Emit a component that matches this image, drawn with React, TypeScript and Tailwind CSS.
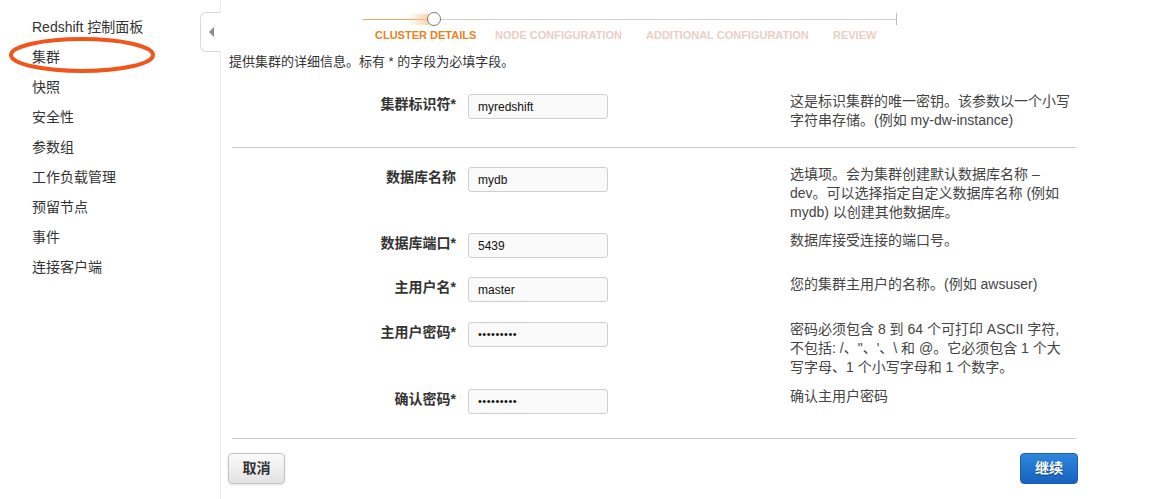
import React from "react";

const navItems = ["集群", "快照", "安全性", "参数组", "工作负载管理", "预留节点", "事件", "连接客户端"];

const steps = [
  { label: "CLUSTER DETAILS", active: true, w: "w-[120px]" },
  { label: "NODE CONFIGURATION", active: false, w: "w-[151px]" },
  { label: "ADDITIONAL CONFIGURATION", active: false, w: "w-[187px]" },
  { label: "REVIEW", active: false, w: "w-[50px]" },
];

type Field = {
  label: string;
  value: string;
  password?: boolean;
  desc: string[];
  top: string;
};

const fields: Field[] = [
  {
    label: "数据库名称",
    value: "mydb",
    desc: ["选填项。会为集群创建默认数据库名称 –", "dev。可以选择指定自定义数据库名称 (例如", "mydb) 以创建其他数据库。"],
    top: "mt-[17px]",
  },
  { label: "数据库端口*", value: "5439", desc: ["数据库接受连接的端口号。"], top: "mt-[9px]" },
  { label: "主用户名*", value: "master", desc: ["您的集群主用户的名称。(例如 awsuser)"], top: "mt-[17px]" },
  {
    label: "主用户密码*",
    value: "•••••••••",
    password: true,
    desc: ["密码必须包含 8 到 64 个可打印 ASCII 字符,", "不包括: /、\"、'、\\ 和 @。它必须包含 1 个大", "写字母、1 个小写字母和 1 个数字。"],
    top: "mt-[18px]",
  },
  { label: "确认密码*", value: "•••••••••", password: true, desc: ["确认主用户密码"], top: "mt-[10px]" },
];

function Row({ f, top }: { f: Field; top: string }) {
  return (
    <div className={`flex items-start ${top}`}>
      <div className="w-[239px] text-right pr-[12px] leading-[25px] text-[14px] font-semibold text-[#333]">
        {f.label}
      </div>
      <div
        className={`w-[140px] h-[25px] mt-[2px] rounded-[3px] border border-[#cfcfcf] bg-[#fafafa] pl-[9px] flex items-center text-[#111] ${
          f.password ? "text-[11px] tracking-[0.5px]" : "text-[12px]"
        }`}
      >
        {f.value}
      </div>
      <div className="ml-[182px] text-[14px] leading-[19px] text-[#444]">
        {f.desc.map((d) => (
          <div key={d}>{d}</div>
        ))}
      </div>
    </div>
  );
}

export default function App() {
  return (
    <div
      className="relative flex h-[499px] w-[1171px] overflow-hidden bg-white text-[#333]"
      style={{ fontFamily: '"Liberation Sans", "Noto Sans CJK SC", sans-serif' }}
    >
      {/* Sidebar */}
      <aside className="relative w-[221px] shrink-0 border-r border-[#ececec] pt-[17px]">
        <div className="pl-[32px] text-[14px] leading-[20px] text-[#333]">Redshift 控制面板</div>
        <ul className="mt-[10px] flex flex-col gap-[10px]">
          {navItems.map((n) => (
            <li key={n} className="pl-[32px] text-[14px] leading-[20px] text-[#333]">
              {n}
            </li>
          ))}
        </ul>
        {/* hand-drawn highlight */}
        <svg className="absolute left-[8px] top-[36px]" width="148" height="38" viewBox="0 0 148 38">
          <ellipse cx="74" cy="19" rx="71" ry="16" fill="none" stroke="#f0561c" strokeWidth="4" />
        </svg>
        {/* collapse tab */}
        <div className="absolute right-[-1px] top-[12px] flex h-[40px] w-[21px] items-center justify-center rounded-l-[6px] border border-r-0 border-[#d8d8d8] bg-white">
          <div className="h-0 w-0 border-y-[5px] border-r-[5px] border-y-transparent border-r-[#8a8a8a]" />
        </div>
      </aside>

      {/* Main */}
      <main className="flex-1 pl-[8px]">
        {/* Wizard steps */}
        <div className="ml-[134px] w-[534px] pt-[13px]">
          <div className="relative h-[12px]">
            <div className="absolute left-0 right-0 top-[6px] h-px bg-[#cfcfcf]" />
            <div className="absolute left-0 top-[6px] h-px w-[64px] bg-[#f0a55a]" />
            <div className="absolute left-[44px] top-[1px] h-[11px] w-[22px] bg-gradient-to-r from-transparent to-[#f7c79a] opacity-80" />
            <div className="absolute left-[64px] top-[-1px] h-[14px] w-[14px] rounded-full border-[1.5px] border-[#7a7a7a] bg-white" />
            <div className="absolute right-0 top-0 h-[12px] w-px bg-[#bdbdbd]" />
          </div>
          <div className="mt-[2px] flex pl-[12px] text-[11px] font-bold leading-[16px]">
            {steps.map((s) => (
              <span key={s.label} className={`${s.w} shrink-0 whitespace-nowrap ${s.active ? "text-[#e8821e]" : "text-[#ebcdc6]"}`}>
                {s.label}
              </span>
            ))}
          </div>
        </div>

        <p className="mt-[9px] text-[13px] leading-[19px] text-[#333]">提供集群的详细信息。标有 * 的字段为必填字段。</p>

        <div className="mt-[21px] w-[852px]">
          <Row
            f={{
              label: "集群标识符*",
              value: "myredshift",
              desc: ["这是标识集群的唯一密钥。该参数以一个小写", "字符串存储。(例如 my-dw-instance)"],
              top: "",
            }}
            top=""
          />
          <div className="ml-[3px] mt-[17px] h-px w-[844px] bg-[#c8c8c8]" />
          {fields.map((f) => (
            <Row key={f.label} f={f} top={f.top} />
          ))}
          <div className="ml-[3px] mt-[24px] h-px w-[844px] bg-[#c8c8c8]" />
          <div className="mt-[14px] flex justify-between pr-[3px] ml-[-1px]">
            <button className="h-[31px] w-[57px] rounded-[4px] border border-[#c4c4c4] bg-gradient-to-b from-[#fafafa] to-[#e2e2e2] text-[14px] font-bold text-[#333] shadow-sm">
              取消
            </button>
            <button className="h-[31px] w-[58px] rounded-[4px] border border-[#1b5fb4] bg-gradient-to-b from-[#2e86dc] to-[#1862be] text-[14px] font-bold text-white [text-shadow:0_1px_1px_rgba(0,0,0,0.45)]">
              继续
            </button>
          </div>
        </div>
      </main>
    </div>
  );
}
